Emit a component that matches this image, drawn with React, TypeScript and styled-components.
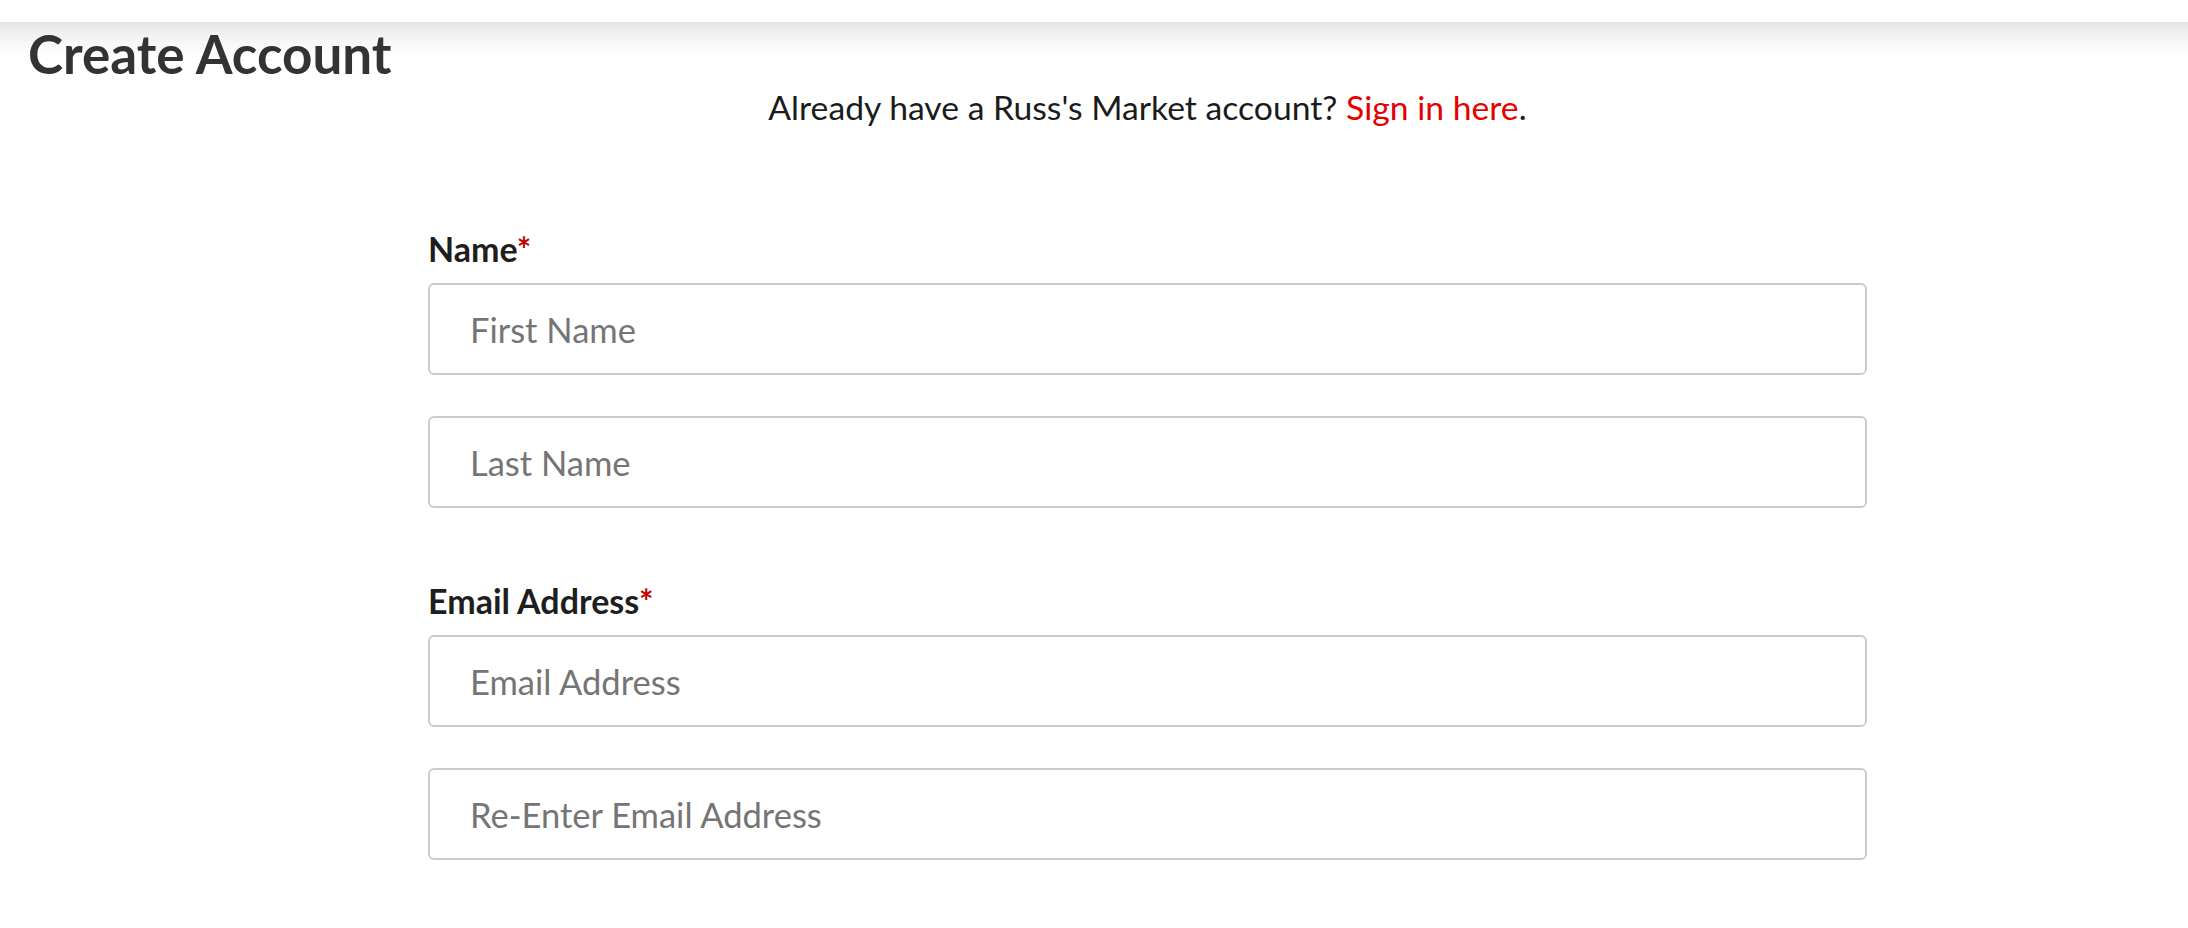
import React from 'react';
import styled, { createGlobalStyle } from 'styled-components';

const GlobalStyle = createGlobalStyle`
  html, body {
    margin: 0;
    padding: 0;
    background: #fff;
  }

  body {
    font-family: Lato, "Open Sans", "Liberation Sans", sans-serif;
    color: #1b1b1b;
  }

  * {
    box-sizing: border-box;
  }
`;

const Page = styled.div`
  min-height: 928px;
  padding: 0 28px;
  background: linear-gradient(
      to bottom,
      #e3e3e3 0,
      #efefef 10px,
      #f7f7f7 20px,
      #fff 36px
    )
    no-repeat;
`;

const Title = styled.h1`
  margin: 22px 0 0;
  font-size: 53px;
  line-height: 64px;
  font-weight: 700;
  color: #333;
`;

const Form = styled.form`
  width: 1439px;
  margin-left: 400px;
  display: flex;
  flex-direction: column;
`;

const Intro = styled.p`
  margin: 1px 0 100px;
  font-size: 33.7px;
  line-height: 41px;
  text-align: center;
  color: #1b1b1b;
`;

const SignInLink = styled.a`
  color: #e60000;
  text-decoration: none;
`;

const FieldGroup = styled.div`
  display: flex;
  flex-direction: column;
  gap: 41px;
  margin-bottom: 72px;
`;

const Label = styled.label`
  display: block;
  margin-bottom: -27px;
  font-size: 34px;
  line-height: 41px;
  font-weight: 700;
  color: #1e1e1e;
`;

const Required = styled.span`
  color: #c00000;
`;

const Input = styled.input`
  height: 92px;
  width: 100%;
  padding: 0 40px;
  border: 2px solid #cccccc;
  border-radius: 6px;
  background: #fff;
  font-family: inherit;
  font-size: 34.5px;
  color: #333;
  outline: none;

  &::placeholder {
    color: #757575;
  }
`;

interface Field {
  label: string;
  placeholders: string[];
  type: string;
}

const fields: Field[] = [
  { label: 'Name', placeholders: ['First Name', 'Last Name'], type: 'text' },
  { label: 'Email Address', placeholders: ['Email Address', 'Re-Enter Email Address'], type: 'email' },
];

export default function App() {
  return (
    <>
      <GlobalStyle />
      <Page>
        <Title>Create Account</Title>
        <Form onSubmit={e => e.preventDefault()}>
          <Intro>
            Already have a Russ's Market account? <SignInLink href="#">Sign in here</SignInLink>.
          </Intro>
          {fields.map(field => (
            <FieldGroup key={field.label}>
              <Label>
                {field.label}
                <Required>*</Required>
              </Label>
              {field.placeholders.map(p => (
                <Input key={p} type={field.type} placeholder={p} />
              ))}
            </FieldGroup>
          ))}
        </Form>
      </Page>
    </>
  );
}
